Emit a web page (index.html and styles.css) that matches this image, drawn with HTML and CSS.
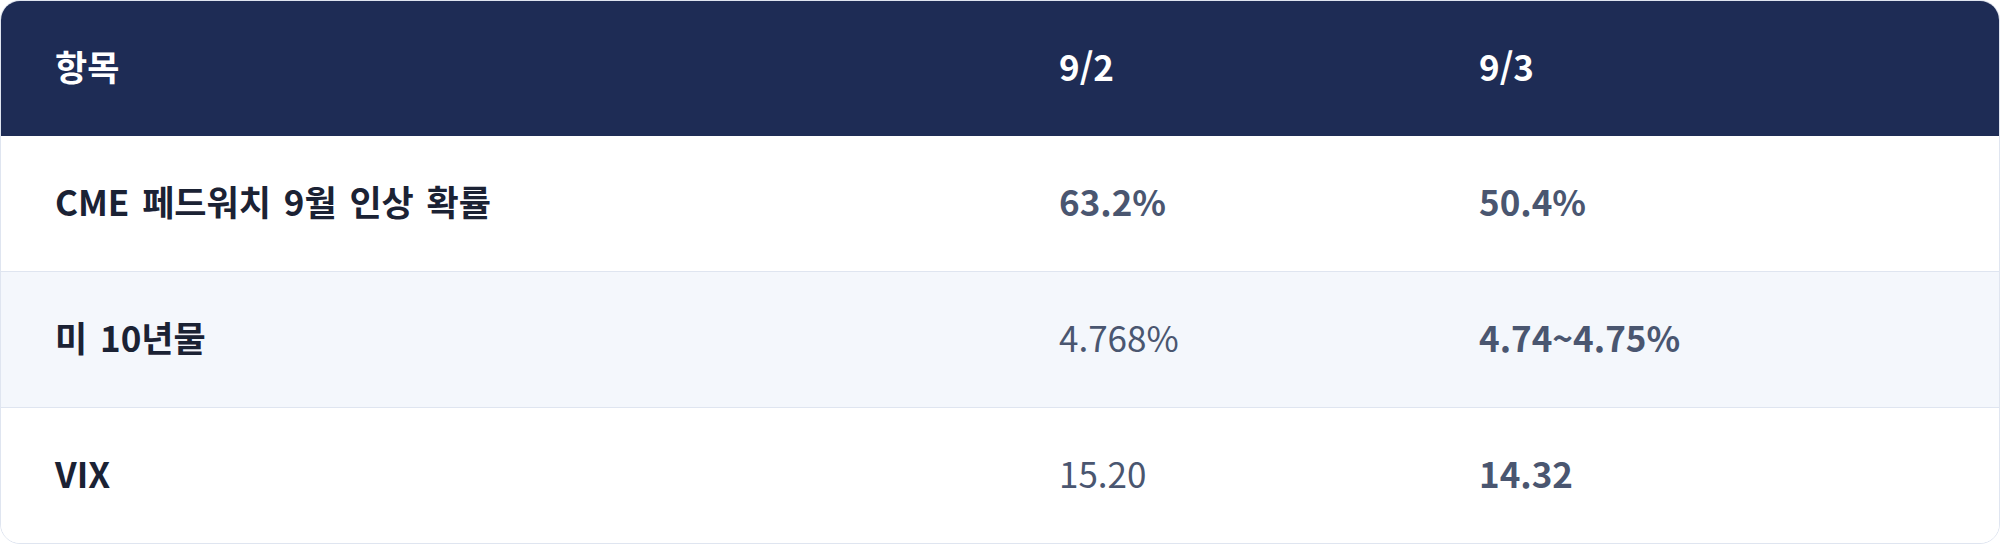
FILE: index.html
```html
<!DOCTYPE html>
<html lang="ko">
<head>
<meta charset="utf-8">
<title>표</title>
<link rel="stylesheet" href="styles.css">
</head>
<body>
<div class="table">
  <div class="row head">
    <div class="cell">항목</div>
    <div class="cell">9/2</div>
    <div class="cell">9/3</div>
  </div>
  <div class="row">
    <div class="cell label">CME 페드워치 9월 인상 확률</div>
    <div class="cell val strong">63.2%</div>
    <div class="cell val strong">50.4%</div>
  </div>
  <div class="row alt">
    <div class="cell label">미 10년물</div>
    <div class="cell val">4.768%</div>
    <div class="cell val strong">4.74~4.75%</div>
  </div>
  <div class="row">
    <div class="cell label">VIX</div>
    <div class="cell val">15.20</div>
    <div class="cell val strong">14.32</div>
  </div>
</div>
</body>
</html>
```
FILE: styles.css
```css
html, body {
  margin: 0;
  padding: 0;
  background: #ffffff;
}
body {
  font-family: "Noto Sans CJK KR", "Noto Sans", sans-serif;
  width: 2000px;
  height: 544px;
}
.table {
  box-sizing: border-box;
  width: 2000px;
  height: 544px;
  border: 1px solid #dfe5f0;
  border-radius: 20px;
  overflow: hidden;
  display: flex;
  flex-direction: column;
}
.row {
  display: grid;
  grid-template-columns: 1004px 420px 1fr;
  height: 135px;
  background: #ffffff;
}
.row + .row {
  border-top: 1px solid #dfe5f0;
}
.row.head + .row {
  border-top: none;
}
.row.head {
  background: #1e2c55;
  color: #ffffff;
  font-weight: 700;
}
.row.alt {
  background: #f4f7fc;
}
.cell {
  display: flex;
  align-items: center;
  padding-left: 54px;
  padding-bottom: 7px;
  font-size: 35px;
  line-height: 1;
}
.label {
  font-weight: 700;
  color: #1b2234;
  word-spacing: 3px;
}
.val {
  color: #4a5670;
  font-weight: 400;
}
.val.strong {
  font-weight: 700;
}
```
